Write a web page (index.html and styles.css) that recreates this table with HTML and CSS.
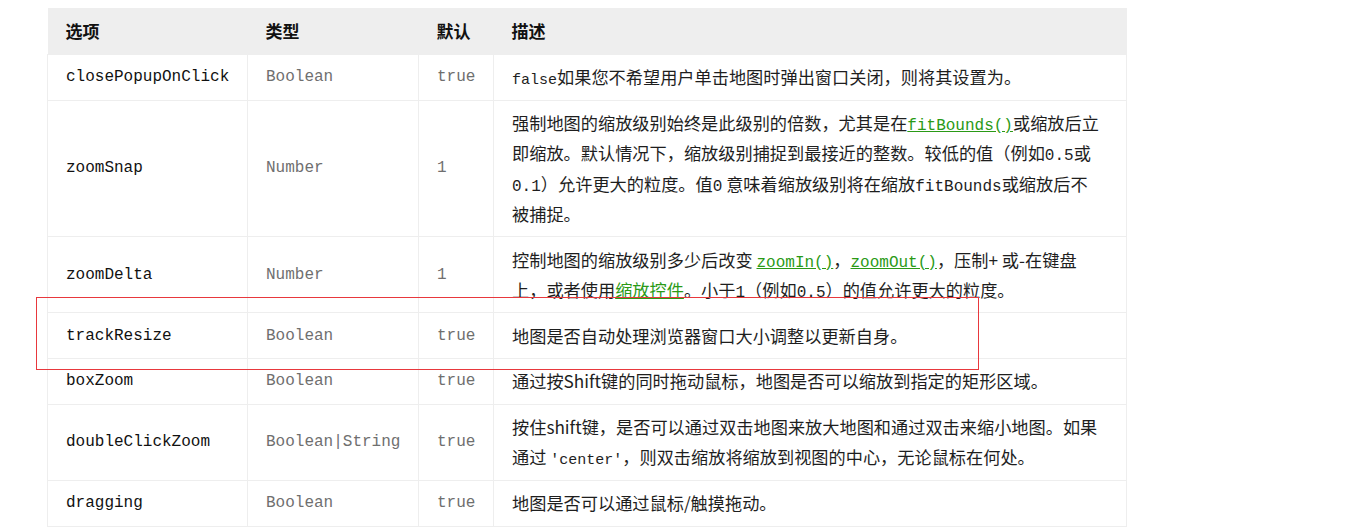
FILE: index.html
```html
<!DOCTYPE html>
<html lang="zh-CN">
<head>
    <meta charset="UTF-8">
    <meta name="viewport" content="width=device-width, initial-scale=1.0">
    <title>地图选项</title>
    <link rel="stylesheet" href="styles.css">
</head>
<body>
    <!-- Tabla de opciones del mapa -->
    <div class="page">
        <table class="options">
            <thead>
                <tr>
                    <th class="col-name">选项</th>
                    <th class="col-type">类型</th>
                    <th class="col-default">默认</th>
                    <th>描述</th>
                </tr>
            </thead>
            <tbody>
                <tr>
                    <td class="name">closePopupOnClick</td>
                    <td class="type">Boolean</td>
                    <td class="type">true</td>
                    <td class="desc"><code class="small">false</code>如果您不希望用户单击地图时弹出窗口关闭，则将其设置为。</td>
                </tr>
                <tr>
                    <td class="name">zoomSnap</td>
                    <td class="type">Number</td>
                    <td class="type">1</td>
                    <td class="desc">强制地图的缩放级别始终是此级别的倍数，尤其是在<a href="#"><code>fitBounds()</code></a>或缩放后立即缩放。默认情况下，缩放级别捕捉到最接近的整数。较低的值（例如<code>0.5</code>或<code>0.1</code>）允许更大的粒度。值<code>0</code> 意味着缩放级别将在缩放<code>fitBounds</code>或缩放后不被捕捉。</td>
                </tr>
                <tr>
                    <td class="name">zoomDelta</td>
                    <td class="type">Number</td>
                    <td class="type">1</td>
                    <td class="desc">控制地图的缩放级别多少后改变 <a href="#"><code>zoomIn()</code></a>，<a href="#"><code>zoomOut()</code></a>，压制+ 或-在键盘<br>上，或者使用<a href="#">缩放控件</a>。小于<code>1</code>（例如<code>0.5</code>）的值允许更大的粒度。</td>
                </tr>
                <tr>
                    <td class="name">trackResize</td>
                    <td class="type">Boolean</td>
                    <td class="type">true</td>
                    <td class="desc">地图是否自动处理浏览器窗口大小调整以更新自身。</td>
                </tr>
                <tr>
                    <td class="name">boxZoom</td>
                    <td class="type">Boolean</td>
                    <td class="type">true</td>
                    <td class="desc">通过按Shift键的同时拖动鼠标，地图是否可以缩放到指定的矩形区域。</td>
                </tr>
                <tr>
                    <td class="name">doubleClickZoom</td>
                    <td class="type">Boolean|String</td>
                    <td class="type">true</td>
                    <td class="desc">按住shift键，是否可以通过双击地图来放大地图和通过双击来缩小地图。如果通过 <code class="small">'center'</code>，则双击缩放将缩放到视图的中心，无论鼠标在何处。</td>
                </tr>
                <tr>
                    <td class="name">dragging</td>
                    <td class="type">Boolean</td>
                    <td class="type">true</td>
                    <td class="desc">地图是否可以通过鼠标/触摸拖动。</td>
                </tr>
            </tbody>
        </table>
        <!-- Marco rojo de resaltado -->
        <div class="highlight"></div>
    </div>
</body>
</html>
```

FILE: styles.css
```css
/* Reset basico */
body {
    margin: 0;
    background: #fff;
    font-family: "Noto Sans CJK SC", "Noto Sans", sans-serif;
    color: #222;
}
/* Contenedor de la pagina */
.page {
    position: relative;
    padding: 8px 0 0 47px;
}
/* Tabla */
.options {
    width: 1080px;
    border-collapse: collapse;
    table-layout: fixed;
    font-size: 17.2px;
}
.options th,
.options td {
    box-sizing: border-box;
}
.options th {
    background: #eee;
    text-align: left;
    font-weight: bold;
    font-size: 17px;
    padding: 8px 18px;
    line-height: 30px;
    color: #111;
}
.col-name { width: 200px; }
.col-type { width: 171px; }
.col-default { width: 75px; }
.options td {
    border: 1px solid #eee;
    padding: 7.3px 25px 7.3px 18px;
    line-height: 30.2px;
    vertical-align: middle;
}
.options td.name,
.options td.type {
    font-family: "Liberation Mono", monospace;
    font-size: 16px;
    white-space: nowrap;
}
.options td.name {
    color: #111;
}
.options td.type {
    color: #6f6f6f;
}
.desc {
    color: #1e1e1e;
}
.desc code {
    font-family: "Liberation Mono", monospace;
    font-size: 16px;
    line-height: 1;
}
.desc code.small {
    font-size: 15px;
}
.desc a {
    color: #2a9a16;
    text-decoration: underline;
}
/* Marco rojo */
.highlight {
    position: absolute;
    left: 36px;
    top: 297px;
    width: 941px;
    height: 71px;
    border: 1px solid #e8383d;
    pointer-events: none;
}
```
